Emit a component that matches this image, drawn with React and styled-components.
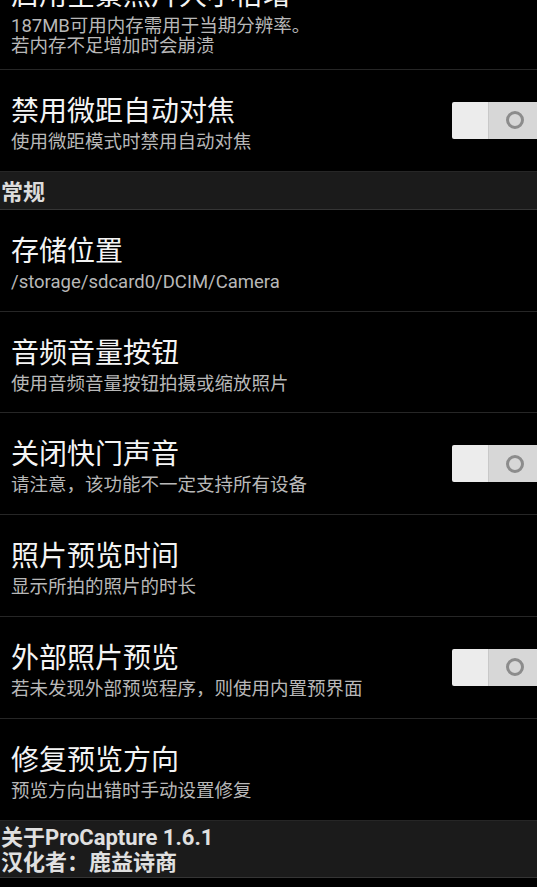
import React from 'react';
import styled, { createGlobalStyle } from 'styled-components';

const GlobalStyle = createGlobalStyle`
  html, body {
    margin: 0;
    padding: 0;
    background: #000;
    overflow: hidden;
  }
  body {
    font-family: Roboto, "Noto Sans CJK SC", sans-serif;
  }
`;

const settings = [
  {
    title: '启用全景照片大小倍增',
    summary: ['187MB可用内存需用于当期分辨率。', '若内存不足增加时会崩溃'],
    first: true,
  },
  { title: '禁用微距自动对焦', summary: ['使用微距模式时禁用自动对焦'], toggle: true },
  { header: '常规' },
  { title: '存储位置', summary: ['/storage/sdcard0/DCIM/Camera'] },
  { title: '音频音量按钮', summary: ['使用音频音量按钮拍摄或缩放照片'] },
  { title: '关闭快门声音', summary: ['请注意，该功能不一定支持所有设备'], toggle: true },
  { title: '照片预览时间', summary: ['显示所拍的照片的时长'] },
  { title: '外部照片预览', summary: ['若未发现外部预览程序，则使用内置预界面'], toggle: true },
  { title: '修复预览方向', summary: ['预览方向出错时手动设置修复'] },
];

const App = () => {
  return (
    <>
      <GlobalStyle />
      <Screen>
        {settings.map((item, i) =>
          item.header ? (
            <CategoryHeader key={i}>{item.header}</CategoryHeader>
          ) : (
            <Row key={i} $first={item.first}>
              <TextBlock>
                <Title>{item.title}</Title>
                {item.summary.map((line) => (
                  <Summary key={line}>{line}</Summary>
                ))}
              </TextBlock>
              {item.toggle && (
                <Switch>
                  <SwitchThumb />
                  <SwitchTrack>
                    <OffMark />
                  </SwitchTrack>
                </Switch>
              )}
            </Row>
          )
        )}
        <AboutHeader>
          <AboutLine>关于ProCapture 1.6.1</AboutLine>
          <AboutLine>汉化者：鹿益诗商</AboutLine>
        </AboutHeader>
      </Screen>
    </>
  );
};

const Screen = styled.div`
  width: 537px;
  height: 887px;
  background: #000;
  overflow: hidden;
  display: flex;
  flex-direction: column;
`;

const Row = styled.div`
  box-sizing: border-box;
  display: flex;
  align-items: stretch;
  flex-shrink: 0;
  min-height: ${(p) => (p.$first ? '116px' : '101.8px')};
  margin-top: ${(p) => (p.$first ? '-46px' : '0')};
  border-bottom: 1px solid #262626;
`;

const TextBlock = styled.div`
  flex: 1;
  padding: 22px 0 12px 11px;
`;

const Title = styled.div`
  font-family: "Noto Sans CJK SC", sans-serif;
  font-size: 28px;
  line-height: 34px;
  color: #f4f4f4;
  margin-bottom: 6px;
`;

const Summary = styled.div`
  font-family: Roboto, "Noto Sans CJK SC", sans-serif;
  font-size: 18.5px;
  line-height: 20px;
  color: #b8b8b8;
`;

const Switch = styled.div`
  align-self: center;
  display: flex;
  width: 86px;
  height: 37px;
  margin-right: -1px;
  border-radius: 2px 0 0 2px;
  overflow: hidden;
`;

const SwitchThumb = styled.div`
  width: 36px;
  background: #ececec;
  border-right: 1px solid #c8c8c8;
`;

const SwitchTrack = styled.div`
  flex: 1;
  background: #d7d7d7;
  display: flex;
  align-items: center;
  justify-content: center;
  padding-left: 2px;
`;

const OffMark = styled.div`
  box-sizing: border-box;
  width: 18px;
  height: 18px;
  border-radius: 50%;
  border: 3px solid #8c8c8c;
`;

const CategoryHeader = styled.div`
  box-sizing: border-box;
  flex-shrink: 0;
  height: 38px;
  display: flex;
  align-items: center;
  padding-left: 1px;
  background: #1b1b1b;
  border-bottom: 1px solid #353535;
  font-family: "Noto Sans CJK SC", sans-serif;
  font-weight: 700;
  font-size: 22px;
  color: #dcdcdc;
`;

const AboutHeader = styled.div`
  box-sizing: border-box;
  flex-shrink: 0;
  height: 57px;
  padding: 4px 0 0 1px;
  background: #1b1b1b;
  border-bottom: 1px solid #353535;
`;

const AboutLine = styled.div`
  font-family: Roboto, "Noto Sans CJK SC", sans-serif;
  font-weight: 700;
  font-size: 22px;
  line-height: 25px;
  color: #e0e0e0;
`;

export default App;
